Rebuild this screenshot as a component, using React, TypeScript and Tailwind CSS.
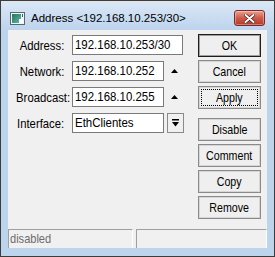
import React from "react";

const Up = () => (
  <svg width="7" height="4" viewBox="0 0 7 4" className="block">
    <polygon points="0,4 7,4 3.5,0" fill="#000" />
  </svg>
);

function Row({ label, value, w, extra }: { label: string; value: string; w: string; extra?: React.ReactNode }) {
  return (
    <div className="flex items-center h-[20px]">
      <div className="w-[56px] text-right text-[13px] leading-none text-black whitespace-nowrap">
        <span className="inline-block scale-x-[0.87] origin-right">{label}</span>
      </div>
      <div className={`ml-[8px] h-[20px] bg-white border border-[#7a7a7a] flex items-center pl-[2px] text-[13px] text-black whitespace-nowrap overflow-hidden ${w}`}>
        <span className="inline-block scale-x-[0.88] origin-left">{value}</span>
      </div>
      {extra}
    </div>
  );
}

function Btn({ children, kind, className = "" }: { children: React.ReactNode; kind?: "ok" | "focus"; className?: string }) {
  const border =
    kind === "ok"
      ? "border border-[#1e1e1e] shadow-[inset_0_0_0_1px_#a0a0a0]"
      : "border border-[#8a8a8a] shadow-[inset_0_0_0_1px_#d6d6d6]";
  const label = <span className="inline-block scale-x-[0.82] origin-center whitespace-nowrap">{children}</span>;
  return (
    <div className={`h-[23px] w-[63px] bg-[#efefef] flex items-center justify-center text-[13px] text-black ${border} ${className}`}>
      {kind === "focus" ? (
        <div className="w-[57px] h-[17px] border border-dotted border-black flex items-center justify-center">{label}</div>
      ) : (
        label
      )}
    </div>
  );
}

export default function App() {
  return (
    <div className="w-[275px] h-[257px] border border-[#3c3c3c] bg-[#bcd4ec] flex flex-col font-['Liberation_Sans',Arial,sans-serif] select-none">
      {/* title bar */}
      <div className="h-[29px] flex items-start bg-gradient-to-b from-[#dbe8f6] to-[#bdd4ed]">
        <div className="mt-[11px] ml-[9px]">
          <svg width="15" height="13" viewBox="0 0 15 13" className="block">
            <defs>
              <linearGradient id="ig" x1="0" y1="0" x2="1" y2="1">
                <stop offset="0" stopColor="#1f7a4a" />
                <stop offset="1" stopColor="#6fb0b8" />
              </linearGradient>
            </defs>
            <rect x="0.5" y="0.5" width="14" height="12" fill="#f4f4f4" stroke="#5a6670" />
            <rect x="2" y="2" width="9" height="9" fill="url(#ig)" />
            <rect x="9" y="7" width="4" height="4" fill="#ffffff" />
            <rect x="12" y="2" width="1" height="3" fill="#2c6a8a" />
          </svg>
        </div>
        <div className="ml-[6px] mt-[10px] text-[11.5px] leading-[14px] text-black whitespace-nowrap">Address &lt;192.168.10.253/30&gt;</div>
        <div className="ml-auto mr-[9px] mt-[9px] w-[31px] h-[16px] rounded-[3px] border border-[#7a2a22] bg-gradient-to-b from-[#e8a092] via-[#cf5a48] to-[#b8362a] flex items-center justify-center shadow-[inset_0_0_0_1px_rgba(255,255,255,0.35)]">
          <svg width="11" height="9" viewBox="0 0 11 9" className="block">
            <path d="M1.5 1 L9.5 8 M9.5 1 L1.5 8" stroke="#3a1410" strokeWidth="3.2" strokeLinecap="round" />
            <path d="M1.5 1 L9.5 8 M9.5 1 L1.5 8" stroke="#ffffff" strokeWidth="2" strokeLinecap="round" />
          </svg>
        </div>
      </div>

      {/* client */}
      <div className="mx-[7px] h-[218px] bg-[#f0f0f0] flex flex-col">
        <div className="flex-1 flex">
          <div className="flex-1 pt-[5px] flex flex-col gap-[6px]">
            <Row label="Address:" value="192.168.10.253/30" w="w-[111px]" />
            <Row
              label="Network:"
              value="192.168.10.252"
              w="w-[92px]"
              extra={<div className="ml-[7px] mb-[1px]"><Up /></div>}
            />
            <Row
              label="Broadcast:"
              value="192.168.10.255"
              w="w-[92px]"
              extra={<div className="ml-[7px] mb-[1px]"><Up /></div>}
            />
            <Row
              label="Interface:"
              value="EthClientes"
              w="w-[92px]"
              extra={
                <div className="ml-[3px] w-[17px] h-[20px] border border-[#8a8a8a] bg-[#f0f0f0] flex items-center justify-center">
                  <svg width="7" height="8" viewBox="0 0 7 8" className="block">
                    <rect x="0" y="0" width="7" height="1.5" fill="#000" />
                    <polygon points="0,3 7,3 3.5,7.5" fill="#000" />
                  </svg>
                </div>
              }
            />
          </div>
          <div className="w-[63px] mr-[6px] pt-[4px] flex flex-col gap-[3px]">
            <Btn kind="ok">OK</Btn>
            <Btn>Cancel</Btn>
            <Btn kind="focus">Apply</Btn>
            <Btn className="mt-[6px]">Disable</Btn>
            <Btn>Comment</Btn>
            <Btn>Copy</Btn>
            <Btn>Remove</Btn>
          </div>
        </div>
        <div className="h-[19px] flex gap-[3px]">
          <div className="w-[125px] border-t border-l border-[#a0a0a0] border-r border-r-white flex items-center pl-[1px] text-[13px] text-[#6d6d6d]">
            <span className="inline-block scale-x-[0.85] origin-left">disabled</span>
          </div>
          <div className="flex-1 border-t border-l border-[#a0a0a0] border-r border-r-white"></div>
        </div>
      </div>
    </div>
  );
}
